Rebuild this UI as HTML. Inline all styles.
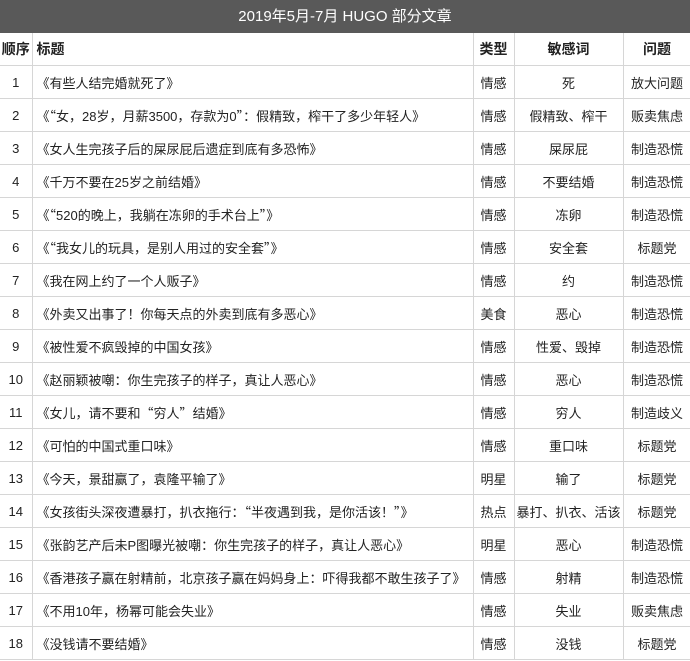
<!DOCTYPE html>
<html><head><meta charset="utf-8"><style>
body{margin:0;width:690px;height:661px;overflow:hidden;background:#fff;font-family:"Liberation Sans","Noto Sans CJK SC",sans-serif;color:#222;}
.t{height:33px;background:#595959;color:#fff;font-size:15px;text-align:center;line-height:33px;}
table{border-collapse:collapse;table-layout:fixed;width:691px;font-size:13px;}
td{border:1px solid #d6d6d6;height:32px;padding:0;text-align:center;white-space:nowrap;overflow:hidden;}
tr td:first-child{border-left:none}
td.l{text-align:left;padding-left:4px}
.q{font-family:"Noto Sans CJK SC",sans-serif}
tr.h td{font-weight:bold;font-size:14px;border-top:none}
</style></head><body>
<div class="t">2019年5月-7月 HUGO 部分文章</div>
<table>
<colgroup><col style="width:32px"><col style="width:441px"><col style="width:41px"><col style="width:109px"><col style="width:68px"></colgroup>
<tr class="h"><td>顺序</td><td class="l">标题</td><td>类型</td><td>敏感词</td><td>问题</td></tr>
<tr><td>1</td><td class="l">《有些人结完婚就死了》</td><td>情感</td><td>死</td><td>放大问题</td></tr>
<tr><td>2</td><td class="l">《<span class="q">“</span>女，28岁，月薪3500，存款为0<span class="q">”</span>：假精致，榨干了多少年轻人》</td><td>情感</td><td>假精致、榨干</td><td>贩卖焦虑</td></tr>
<tr><td>3</td><td class="l">《女人生完孩子后的屎尿屁后遗症到底有多恐怖》</td><td>情感</td><td>屎尿屁</td><td>制造恐慌</td></tr>
<tr><td>4</td><td class="l">《千万不要在25岁之前结婚》</td><td>情感</td><td>不要结婚</td><td>制造恐慌</td></tr>
<tr><td>5</td><td class="l">《<span class="q">“</span>520的晚上，我躺在冻卵的手术台上<span class="q">”</span>》</td><td>情感</td><td>冻卵</td><td>制造恐慌</td></tr>
<tr><td>6</td><td class="l">《<span class="q">“</span>我女儿的玩具，是别人用过的安全套<span class="q">”</span>》</td><td>情感</td><td>安全套</td><td>标题党</td></tr>
<tr><td>7</td><td class="l">《我在网上约了一个人贩子》</td><td>情感</td><td>约</td><td>制造恐慌</td></tr>
<tr><td>8</td><td class="l">《外卖又出事了！你每天点的外卖到底有多恶心》</td><td>美食</td><td>恶心</td><td>制造恐慌</td></tr>
<tr><td>9</td><td class="l">《被性爱不疯毁掉的中国女孩》</td><td>情感</td><td>性爱、毁掉</td><td>制造恐慌</td></tr>
<tr><td>10</td><td class="l">《赵丽颖被嘲：你生完孩子的样子，真让人恶心》</td><td>情感</td><td>恶心</td><td>制造恐慌</td></tr>
<tr><td>11</td><td class="l">《女儿，请不要和<span class="q">“</span>穷人<span class="q">”</span>结婚》</td><td>情感</td><td>穷人</td><td>制造歧义</td></tr>
<tr><td>12</td><td class="l">《可怕的中国式重口味》</td><td>情感</td><td>重口味</td><td>标题党</td></tr>
<tr><td>13</td><td class="l">《今天，景甜赢了，袁隆平输了》</td><td>明星</td><td>输了</td><td>标题党</td></tr>
<tr><td>14</td><td class="l">《女孩街头深夜遭暴打，扒衣拖行：<span class="q">“</span>半夜遇到我，是你活该！<span class="q">”</span>》</td><td>热点</td><td>暴打、扒衣、活该</td><td>标题党</td></tr>
<tr><td>15</td><td class="l">《张韵艺产后未P图曝光被嘲：你生完孩子的样子，真让人恶心》</td><td>明星</td><td>恶心</td><td>制造恐慌</td></tr>
<tr><td>16</td><td class="l">《香港孩子赢在射精前，北京孩子赢在妈妈身上：吓得我都不敢生孩子了》</td><td>情感</td><td>射精</td><td>制造恐慌</td></tr>
<tr><td>17</td><td class="l">《不用10年，杨幂可能会失业》</td><td>情感</td><td>失业</td><td>贩卖焦虑</td></tr>
<tr><td>18</td><td class="l">《没钱请不要结婚》</td><td>情感</td><td>没钱</td><td>标题党</td></tr>
</table>
</body></html>
